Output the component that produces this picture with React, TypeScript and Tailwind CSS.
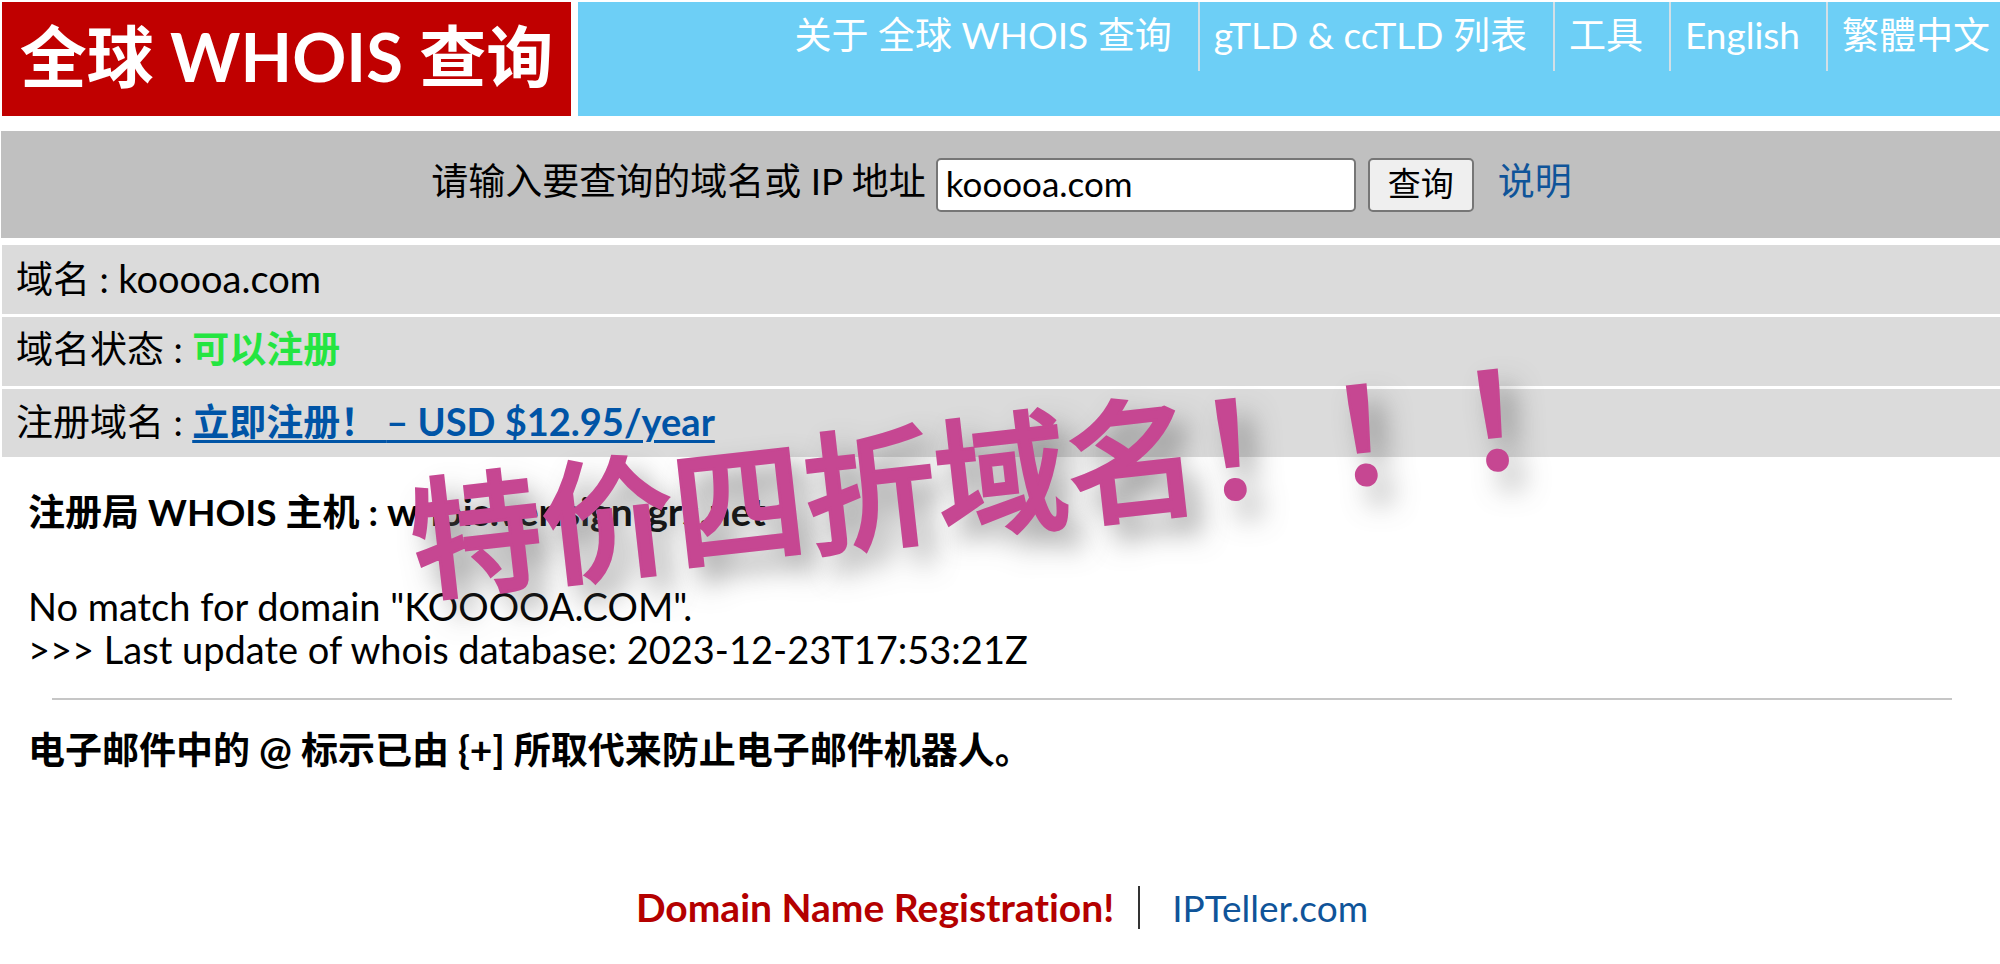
const navLinks = [
  "关于 全球 WHOIS 查询",
  "gTLD & ccTLD 列表",
  "工具",
  "English",
  "繁體中文",
];

function Header() {
  return (
    <header className="mt-[2px] ml-[2px] flex gap-[7px] text-white">
      <h1 className="flex h-[114px] w-[569px] shrink-0 justify-center bg-[#c00000] text-[67px] leading-[108px] font-bold whitespace-nowrap">
        全球 WHOIS 查询
      </h1>
      <nav className="flex flex-1 items-start justify-end bg-[#6dcff6]">
        {navLinks.map((label, i) => (
          <a
            key={label}
            href="#"
            className={
              i === navLinks.length - 1
                ? "h-[69px] pr-2.5 pl-3.5 leading-[66px] whitespace-nowrap"
                : "h-[69px] border-r-2 border-[#d3dfe6] pr-[26px] pl-3.5 leading-[66px] whitespace-nowrap"
            }
          >
            {label}
          </a>
        ))}
      </nav>
    </header>
  );
}

function SearchBar() {
  return (
    <form
      onSubmit={(e) => e.preventDefault()}
      className="mt-[15px] ml-px flex h-[107px] items-center justify-center bg-[#c0c0c0] pl-[2px]"
    >
      <label htmlFor="query" className="mr-2.5 pb-2 leading-[48px]">
        请输入要查询的域名或 IP 地址
      </label>
      <input
        id="query"
        type="text"
        defaultValue="kooooa.com"
        className="h-[54px] w-[420px] rounded-[5px] border-2 border-[#767676] bg-white px-2 pb-1 text-[35px] outline-none"
      />
      <button
        type="submit"
        className="ml-3 h-[54px] w-[106px] rounded-[5px] border-2 border-[#767676] bg-[#efefef] pb-1 text-[33px] leading-[46px]"
      >
        查询
      </button>
      <a href="#" className="ml-6 pb-2 leading-[48px] text-[#0f5499]">
        说明
      </a>
    </form>
  );
}

function ResultRows() {
  return (
    <section className="mt-[7px] ml-[2px] flex flex-col gap-[3px]">
      <p className="h-[69px] bg-[#dbdbdb] pl-3.5 leading-[66px]">
        域名 : <span className="text-[38px]">kooooa.com</span>
      </p>
      <p className="h-[69px] bg-[#dbdbdb] pl-3.5 leading-[64px]">
        域名状态 : <b className="font-bold text-[#24e541]">可以注册</b>
      </p>
      <p className="h-[68px] bg-[#dbdbdb] pl-3.5 leading-[64px]">
        注册域名 :{" "}
        <a
          href="#"
          className="font-bold text-[#0054a6] underline decoration-[3px] underline-offset-4"
        >
          立即注册！ <span className="text-[38px]">– USD $12.95/year</span>
        </a>
      </p>
    </section>
  );
}

function WhoisRecord() {
  return (
    <section className="px-7 pt-[33px]">
      <h2 className="leading-[43px] font-bold">
        注册局 WHOIS 主机 : <span className="text-[39px]">whois.verisign-grs.net</span>
      </h2>
      <p className="mt-[52px] text-[38px] leading-[43px]">
        No match for domain "KOOOOA.COM".
        <br />
        &gt;&gt;&gt; Last update of whois database: 2023-12-23T17:53:21Z
      </p>
      <hr className="mr-5 ml-6 mt-[27px] border-t-2 border-[#c6c6c6]" />
      <p className="mt-[28px] leading-[43px] font-bold">
        电子邮件中的 <span className="text-[39px]">@</span> 标示已由{" "}
        <span className="text-[39px]">{"{+]"}</span> 所取代来防止电子邮件机器人。
      </p>
    </section>
  );
}

function Footer() {
  return (
    <footer className="mt-[115px] flex items-center justify-center pl-1">
      <a href="#" className="pr-6 text-[39px] leading-[43px] font-bold text-[#b40000]">
        Domain Name Registration!
      </a>
      <a
        href="#"
        className="border-l-2 border-[#333333] pl-8 leading-[43px] text-[#0f5499]"
      >
        IPTeller.com
      </a>
    </footer>
  );
}

export default function App() {
  return (
    <div className="relative overflow-hidden bg-white pb-8 font-['Lato','Noto_Sans_CJK_SC',sans-serif] text-[37px] text-black [font-variant-ligatures:none]">
      <Header />
      <SearchBar />
      <ResultRows />
      <WhoisRecord />
      <Footer />
      <div className="pointer-events-none absolute top-[467px] left-[410px] origin-left rotate-[-6.4deg] font-['Noto_Sans_CJK_SC',sans-serif] text-[132px] leading-[134px] font-medium whitespace-nowrap text-[#c64792] [-webkit-text-stroke:3px_#c64792] [text-shadow:12px_18px_28px_rgba(90,90,90,0.7)]">
        特价四折域名！！！
      </div>
    </div>
  );
}
